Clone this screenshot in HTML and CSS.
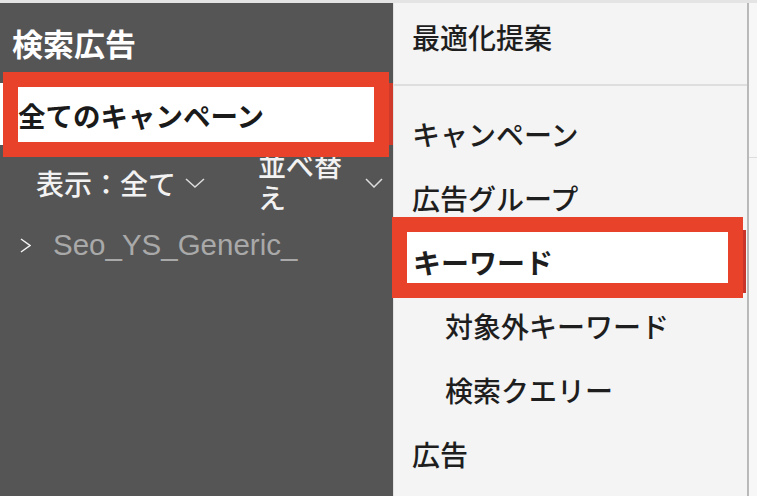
FILE: index.html
```html
<!DOCTYPE html>
<html lang="ja">
<head>
  <meta charset="UTF-8">
  <meta name="viewport" content="width=device-width, initial-scale=1.0">
  <title>検索広告</title>
  <link rel="stylesheet" href="styles.css">
</head>
<body>
  <div class="topbar"></div>
  <div class="layout">
    <aside class="sidebar">
      <h1 class="title">検索広告</h1>
      <div class="current">
        <div class="mark mark-campaign">全てのキャンペーン</div>
      </div>
      <div class="filters">
        <div class="filter filter-view">
          <span>表示：全て</span>
          <svg class="chev" width="20" height="10" viewBox="0 0 20 10"><polyline points="1,1 10,9 19,1" /></svg>
        </div>
        <div class="filter filter-sort">
          <span class="sort-label">並べ替え</span>
          <svg class="chev chev-sort" width="18" height="10" viewBox="0 0 18 10"><polyline points="1,1 9,9 17,1" /></svg>
        </div>
      </div>
      <div class="tree">
        <svg class="caret" width="11" height="15" viewBox="0 0 11 15"><polyline points="1,1 10,7.5 1,14" /></svg>
        <span class="tree-name">Seo_YS_Generic_</span>
      </div>
    </aside>

    <nav class="menu">
      <div class="menu-item first">最適化提案</div>
      <div class="menu-list">
        <div class="menu-item">キャンペーン</div>
        <div class="menu-item">広告グループ</div>
        <div class="menu-item marked">キーワード</div>
        <div class="menu-item sub">対象外キーワード</div>
        <div class="menu-item sub">検索クエリー</div>
        <div class="menu-item">広告</div>
      </div>
    </nav>

    <div class="rest">
      <div class="rest-head"></div>
    </div>
  </div>
</body>
</html>
```

FILE: styles.css
```css
body {
  margin: 0;
  background: #f7f7f7;
  font-family: "Noto Sans CJK JP", sans-serif;
  overflow: hidden;
}
.topbar {
  height: 3px;
  background: #e4e4e4;
}
.layout {
  display: flex;
  height: 493px;
}

/* left sidebar */
.sidebar {
  width: 393px;
  flex: none;
  background: #555555;
}
.title {
  margin: 0;
  height: 80px;
  line-height: 80px;
  padding-left: 12px;
  font-size: 31px;
  font-weight: 700;
  color: #fff;
}
.current {
  position: relative;
  z-index: 1;
  display: flex;
  align-items: flex-start;
  height: 62px;
  background: #fff;
  border-right: 4px solid #cf3a2b;
}
.mark {
  border: 15px solid #e8422b;
  background: #fff;
}
.mark-campaign {
  flex: 1;
  margin: -11px 0 0 3px;
  height: 53px;
  padding-top: 2px;
  line-height: 53px;
  font-size: 27.5px;
  font-weight: 700;
  color: #1a1a1a;
  white-space: nowrap;
}
.filters {
  display: flex;
  align-items: center;
  height: 76px;
  padding-left: 36px;
  font-size: 28px;
  font-weight: 500;
  color: #f2f2f2;
}
.filter {
  display: flex;
  align-items: center;
}
.chev {
  margin-left: 9px;
  fill: none;
  stroke: #dddddd;
  stroke-width: 1.5;
}
.filter-sort {
  margin-left: 53px;
}
.sort-label {
  width: 86px;
  margin-top: -5px;
  line-height: 32px;
}
.chev-sort {
  margin-left: 21px;
}
.tree {
  display: flex;
  align-items: center;
  height: 48px;
  padding-left: 20px;
}
.caret {
  fill: none;
  stroke: #f4f4f4;
  stroke-width: 1.5;
}
.tree-name {
  margin-left: 22px;
  font-family: "Liberation Sans", Arial, sans-serif;
  font-size: 29.5px;
  color: #a9a9a9;
}

/* dropdown menu */
.menu {
  width: 353px;
  flex: none;
  background: #f4f4f4;
  border-left: 1px solid #e2e2e2;
  border-right: 2px solid #b9b9b9;
  font-size: 28px;
  font-weight: 500;
  color: #1e1e1e;
}
.menu-item {
  height: 64px;
  line-height: 64px;
  padding-left: 18px;
  white-space: nowrap;
}
.menu-item.first {
  height: 68px;
  line-height: 68px;
  margin-bottom: 13px;
}
.menu-list {
  border-top: 2px solid #dedede;
  padding-top: 16px;
}
.menu-item.sub {
  padding-left: 51px;
}
.menu-item.marked {
  position: relative;
  margin: -13px 4px -4px -2px;
  height: 42px;
  padding-top: 9px;
  padding-left: 6px;
  line-height: 42px;
  border: 15px solid #e8422b;
  background: #fff;
  font-weight: 700;
}
.menu-item.marked::after {
  content: "";
  position: absolute;
  right: -18px;
  top: -2px;
  width: 3px;
  height: 63px;
  background: #c8352a;
}

/* page behind the menu */
.rest {
  flex: 1;
}
.rest-head {
  height: 154px;
  border-bottom: 1px solid #dddddd;
}
```
